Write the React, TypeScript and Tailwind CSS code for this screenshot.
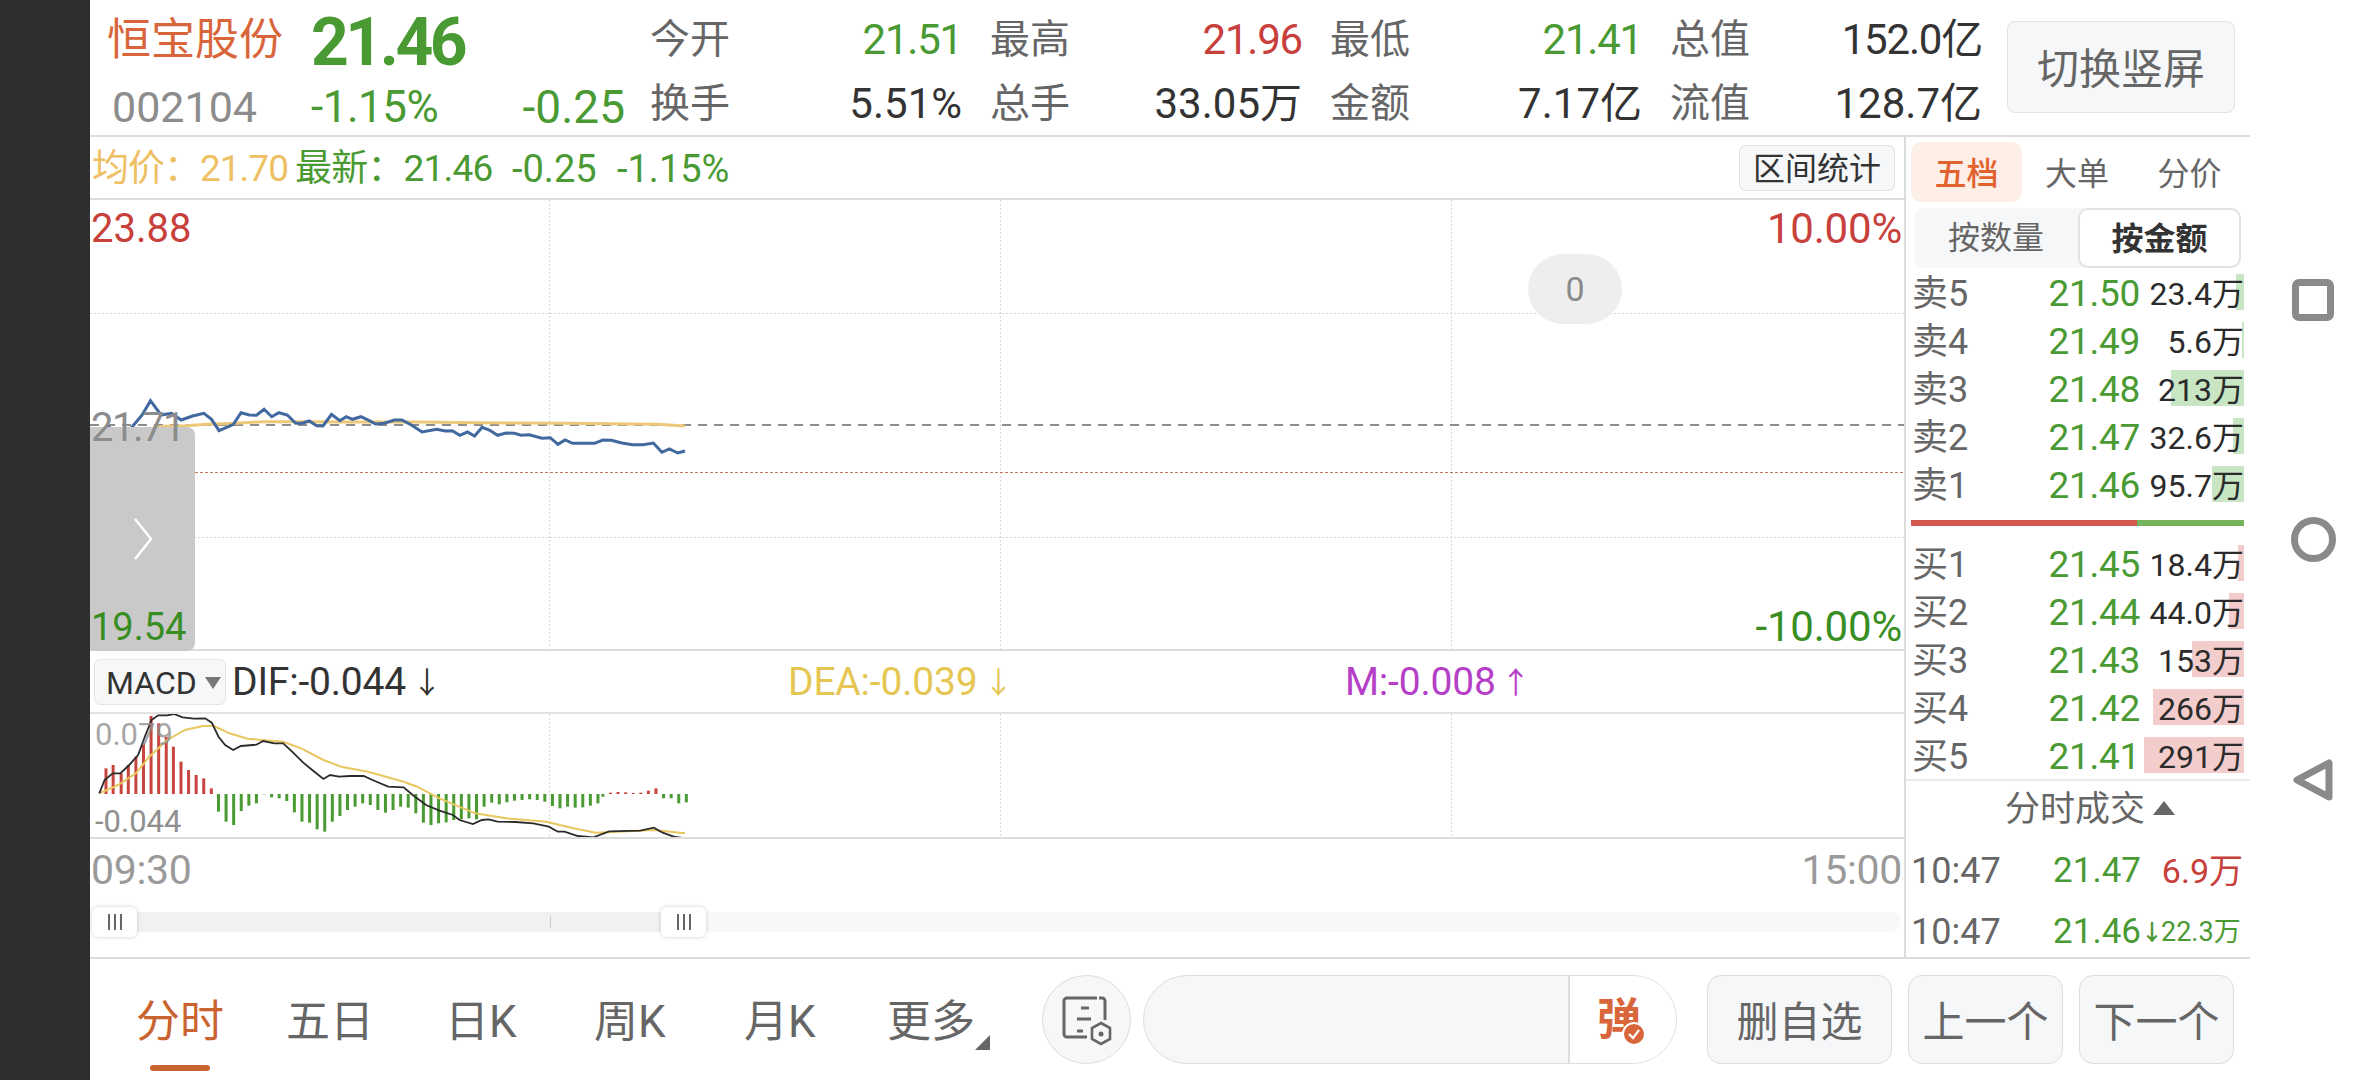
type Pt = [number, number]

// points were read off the reference, page coords = origin + z / factor
const mapPts = (pts: Pt[], ox: number, oy: number, fx: number, fy: number) =>
  pts.map(([x, y]) => `${(ox + x / fx).toFixed(1)},${(oy + y / fy).toFixed(1)}`).join(" ")

const priceLine: Pt[] = [
  [90, 228], [115, 170], [150, 205], [175, 165], [195, 135], [215, 92], [240, 135], [265, 130], [288, 150], [315, 138], [342, 130], [360, 148], [378, 182], [400, 170], [412, 163], [430, 128], [450, 135], [467, 136], [485, 118], [503, 140], [520, 128], [540, 135], [560, 160], [575, 160], [592, 153], [610, 167], [625, 168], [645, 133], [665, 152], [680, 140], [695, 148], [715, 140], [735, 152], [750, 162], [770, 160], [795, 150], [812, 150], [835, 165], [860, 186], [895, 178], [915, 183], [932, 182], [950, 196], [968, 186], [985, 198], [1003, 172], [1020, 180], [1040, 196], [1060, 189], [1080, 190], [1095, 196], [1115, 194], [1145, 205], [1165, 203], [1183, 223], [1200, 210], [1218, 220], [1270, 220], [1290, 210], [1310, 211], [1335, 219], [1360, 224], [1385, 224], [1410, 219], [1430, 247], [1448, 237], [1468, 249], [1485, 243],
]
const avgLine: Pt[] = [
  [90, 205], [130, 203], [170, 200], [200, 190], [225, 172], [260, 168], [300, 167], [350, 163], [420, 160], [480, 155], [560, 155], [700, 156], [850, 156], [1000, 158], [1200, 160], [1420, 163], [1485, 168],
]
const difLine: Pt[] = [
  [88, 460], [100, 420], [118, 400], [135, 400], [155, 375], [175, 345], [190, 290], [205, 240], [220, 226], [240, 226], [255, 222], [275, 232], [300, 236], [325, 235], [340, 248], [355, 290], [370, 315], [388, 330], [405, 318], [440, 314], [455, 303], [480, 310], [500, 310], [520, 335], [545, 368], [565, 390], [590, 417], [605, 405], [625, 410], [650, 408], [680, 408], [700, 420], [735, 440], [770, 442], [790, 465], [820, 495], [850, 512], [880, 525], [895, 540], [925, 552], [945, 540], [960, 538], [980, 545], [1020, 546], [1060, 550], [1095, 560], [1115, 575], [1130, 575], [1160, 588], [1195, 592], [1230, 574], [1300, 572], [1330, 563], [1350, 578], [1375, 590], [1400, 595],
]
const deaLine: Pt[] = [
  [88, 460], [130, 435], [170, 400], [200, 350], [240, 300], [280, 270], [320, 258], [345, 258], [380, 280], [420, 296], [450, 300], [500, 305], [540, 325], [590, 360], [630, 380], [690, 395], [770, 425], [800, 440], [850, 475], [930, 520], [1000, 535], [1090, 545], [1150, 565], [1200, 578], [1250, 575], [1330, 570], [1400, 580],
]
const macdBars: Pt[] = [
  [103, 385], [119, 375], [137, 400], [153, 375], [170, 350], [187, 310], [204, 228], [221, 250], [238, 290], [254, 320], [271, 365], [288, 390], [305, 405], [322, 415], [339, 445],
  [355, 515], [372, 545], [389, 555], [406, 513], [423, 497], [440, 490], [457, 463], [474, 472], [491, 475], [508, 483], [525, 517], [542, 545], [559, 548], [576, 568], [593, 575], [610, 545], [627, 528], [644, 510], [661, 500], [678, 490], [695, 495], [712, 510], [729, 518], [746, 510], [763, 500], [780, 503], [797, 520], [814, 548], [831, 555], [848, 550], [865, 547], [882, 540], [899, 538], [916, 535], [933, 538], [950, 500], [967, 488], [984, 493], [1001, 487], [1018, 482], [1035, 480], [1052, 478], [1069, 480], [1086, 485], [1103, 498], [1120, 505], [1137, 500], [1154, 503], [1171, 502], [1188, 497], [1205, 490], [1216, 470],
  [1233, 458], [1250, 456], [1267, 457], [1284, 459], [1301, 458], [1318, 452], [1335, 445],
  [1352, 475], [1369, 475], [1386, 490], [1403, 487],
]

const stats = [
  { label: "今开", value: "21.51", cls: "text-[#4a9a33]", label2: "换手", value2: "5.51%" },
  { label: "最高", value: "21.96", cls: "text-[#c8403c]", label2: "总手", value2: "33.05万" },
  { label: "最低", value: "21.41", cls: "text-[#4a9a33]", label2: "金额", value2: "7.17亿" },
  { label: "总值", value: "152.0亿", cls: "text-[#333333]", label2: "流值", value2: "128.7亿" },
]

const sells = [
  { name: "卖5", price: "21.50", vol: "23.4万", bar: 8 },
  { name: "卖4", price: "21.49", vol: "5.6万", bar: 2 },
  { name: "卖3", price: "21.48", vol: "213万", bar: 73 },
  { name: "卖2", price: "21.47", vol: "32.6万", bar: 11 },
  { name: "卖1", price: "21.46", vol: "95.7万", bar: 32 },
]
const buys = [
  { name: "买1", price: "21.45", vol: "18.4万", bar: 6 },
  { name: "买2", price: "21.44", vol: "44.0万", bar: 15 },
  { name: "买3", price: "21.43", vol: "153万", bar: 52 },
  { name: "买4", price: "21.42", vol: "266万", bar: 91 },
  { name: "买5", price: "21.41", vol: "291万", bar: 100 },
]

function OrderRow({ row, barCls }: { row: (typeof sells)[number]; barCls: string }) {
  return (
    <div className="relative flex h-[48px] items-center pl-[6px] pt-[4px]">
      <div className={`absolute right-0 top-[6px] h-[36px] ${barCls}`} style={{ width: row.bar }} />
      <span className="relative text-[36px] text-[#666666]">{row.name}</span>
      <span className="relative ml-auto text-[37px] tracking-[-0.3px] text-[#4a9a33]">{row.price}</span>
      <span className="relative w-[104px] text-right text-[32px] whitespace-nowrap text-[#2b2b2b]">{row.vol}</span>
    </div>
  )
}

function Grip() {
  return (
    <div className="flex h-[30px] w-[45px] items-center justify-center gap-[4px] rounded-[6px] bg-white shadow-[0_0_4px_rgba(0,0,0,0.18)]">
      <span className="h-[16px] w-[2px] bg-[#666666]" />
      <span className="h-[16px] w-[2px] bg-[#666666]" />
      <span className="h-[16px] w-[2px] bg-[#666666]" />
    </div>
  )
}

function ActionButton({ label, width }: { label: string; width: string }) {
  return (
    <button className={`flex h-[89px] items-center justify-center rounded-[14px] border border-[#dddddd] bg-[#f6f7f9] pt-[5px] text-[42px] text-[#666666] ${width}`}>
      {label}
    </button>
  )
}

export default function App() {
  return (
    <div className="flex h-[1080px] w-[2376px] overflow-hidden bg-white font-[Roboto,'Noto_Sans_CJK_SC',sans-serif]">
      <div className="w-[90px] shrink-0 bg-[#2e2e2e]" />

      <div className="flex w-[2160px] shrink-0 flex-col">
        {/* header */}
        <header className="flex h-[137px] shrink-0 border-b-2 border-[#dcdcdc] pt-[9px] leading-[62px]">
          <div className="w-[221px] pl-[17px]">
            <div className="h-[62px] text-[44px] text-[#d9653a]">恒宝股份</div>
            <div className="h-[62px] pl-[5px] pt-[5px] text-[43px] text-[#8c8c8c]">002104</div>
          </div>
          <div className="w-[341px]">
            <div className="h-[62px] pt-[3px] text-[66px] font-bold tracking-[-3.5px] text-[#4a9a33]">21.46</div>
            <div className="flex h-[62px] w-[314px] justify-between pt-[5px] text-[#4a9a33]">
              <span className="text-[44px] tracking-[-0.5px]">-1.15%</span>
              <span className="text-[46px]">-0.25</span>
            </div>
          </div>
          {stats.map((s) => (
            <div key={s.label} className="-ml-[2px] mr-[30px] w-[312px]">
              <div className="flex h-[62px] justify-between">
                <span className="text-[40px] text-[#666666]">{s.label}</span>
                <span className={`text-[42px] tracking-[-1.2px] ${s.cls}`}>{s.value}</span>
              </div>
              <div className="flex h-[62px] justify-between pt-[2px]">
                <span className="text-[40px] text-[#666666]">{s.label2}</span>
                <span className="text-[42px] text-[#333333]">{s.value2}</span>
              </div>
            </div>
          ))}
          <button className="-ml-[5px] mt-[12px] h-[92px] w-[228px] rounded-[8px] border border-[#e2e2e2] bg-[#f6f7f9] pt-[5px] text-[42px] leading-none text-[#666666]">
            切换竖屏
          </button>
        </header>

        {/* body */}
        <div className="flex h-[822px] shrink-0 border-b-2 border-[#dcdcdc]">
          <div className="flex w-[1814px] shrink-0 flex-col">
            <div className="flex h-[63px] shrink-0 items-center border-b-2 border-[#dcdcdc] pl-[2px] pt-[3px] text-[37px] text-[#4a9a33]">
              <span className="w-[203px] tracking-[-1px] text-[#eebf63]">均价：21.70</span>
              <span className="w-[217px] tracking-[-0.8px]">最新：21.46</span>
              <span className="w-[105px] text-[38px]">-0.25</span>
              <span className="text-[38px]">-1.15%</span>
              <span className="ml-auto mr-[9px] -mt-[3px] flex h-[46px] w-[156px] items-center justify-center rounded-[6px] border border-[#e2e2e2] bg-[#f6f7f9] pt-[2px] text-[32px] text-[#333333]">
                区间统计
              </span>
            </div>

            {/* price chart */}
            <div className="relative h-[451px] shrink-0 border-b-2 border-[#dcdcdc]">
              <svg className="absolute inset-0 h-[449px] w-[1814px]" viewBox="90 200 1814 449">
                <g stroke="#d8d8d8" strokeWidth="1" strokeDasharray="2 2">
                  <line x1="549.5" y1="200" x2="549.5" y2="649" />
                  <line x1="1000.5" y1="200" x2="1000.5" y2="649" />
                  <line x1="1451.5" y1="200" x2="1451.5" y2="649" />
                  <line x1="90" y1="313.5" x2="1904" y2="313.5" />
                  <line x1="90" y1="537.5" x2="1904" y2="537.5" />
                </g>
                <line x1="90" y1="425" x2="1904" y2="425" stroke="#8c8c8c" strokeWidth="2" strokeDasharray="9 7" />
                <line x1="90" y1="472.5" x2="1904" y2="472.5" stroke="#c0785a" strokeWidth="1" strokeDasharray="3 2" />
                <polyline points={mapPts(avgLine, 60, 370, 2.376, 3)} fill="none" stroke="#ecc878" strokeWidth="3" />
                <polyline points={mapPts(priceLine, 60, 370, 2.376, 3)} fill="none" stroke="#41699f" strokeWidth="3" />
              </svg>
              <span className="absolute left-[1px] top-[9px] text-[40px] leading-[40px] text-[#c8403c]">23.88</span>
              <span className="absolute right-[2px] top-[9px] text-[42px] leading-[40px] tracking-[-0.2px] text-[#c8403c]">10.00%</span>
              <span className="absolute right-[2px] top-[407px] text-[42px] leading-[40px] tracking-[-0.2px] text-[#388e22]">-10.00%</span>
              <span className="absolute left-[1438px] top-[54px] flex h-[70px] w-[94px] items-center justify-center rounded-full bg-[#eeeeee] text-[34px] text-[#8a8a8a]">
                0
              </span>
              <div className="absolute left-0 top-[227px] flex h-[224px] w-[105px] items-center justify-center rounded-r-[8px] bg-[#c9c9c9]">
                <svg className="h-[44px] w-[22px]" viewBox="0 0 22 44" fill="none" stroke="#ffffff" strokeWidth="2.5">
                  <polyline points="3,2 19,22 3,42" />
                </svg>
              </div>
              <span className="absolute left-[1px] top-[208px] text-[40px] leading-[40px] tracking-[-1.5px] text-[#8c8c8c]">21.71</span>
              <span className="absolute left-[1px] top-[407px] text-[38px] leading-[40px] text-[#388e22]">19.54</span>
            </div>

            {/* macd header */}
            <div className="flex h-[63px] shrink-0 items-center border-b-2 border-[#e2e2e2] pt-[2px] text-[39px] text-[#333333]">
              <div className="-mt-[2px] ml-[4px] flex h-[46px] w-[132px] items-center gap-[8px] rounded-[6px] border border-[#e6e6e6] bg-[#f6f7f9] pl-[11px] pt-[2px] text-[32px]">
                MACD
                <span className="h-0 w-0 border-x-[8px] border-t-[12px] border-x-transparent border-t-[#777777]" />
              </div>
              <span className="ml-[6px] flex w-[556px] items-center gap-[6px] tracking-[-0.2px]">
                DIF:-0.044<span className="text-[30px]">↓</span>
              </span>
              <span className="flex w-[557px] items-center gap-[6px] tracking-[-0.2px] text-[#e6c652]">
                DEA:-0.039<span className="text-[30px]">↓</span>
              </span>
              <span className="flex items-center gap-[5px] tracking-[-0.2px] text-[#b63fc7]">
                M:-0.008<span className="text-[30px]">↑</span>
              </span>
            </div>

            {/* macd chart */}
            <div className="relative h-[125px] shrink-0 border-b-2 border-[#dcdcdc]">
              <svg className="absolute inset-0 h-[123px] w-[1814px]" viewBox="90 714 1814 123">
                <g stroke="#d8d8d8" strokeWidth="1" strokeDasharray="2 2">
                  <line x1="549.5" y1="714" x2="549.5" y2="837" />
                  <line x1="1000.5" y1="714" x2="1000.5" y2="837" />
                  <line x1="1451.5" y1="714" x2="1451.5" y2="837" />
                </g>
                {macdBars.map(([x, y]) => {
                  const px = 60 + x / 2.24
                  const py = 640 + y / 3
                  const base = 640 + 462 / 3
                  const up = py < base
                  return (
                    <rect
                      key={x}
                      x={px - 1.5}
                      y={up ? py : base}
                      width="3"
                      height={Math.abs(base - py)}
                      fill={up ? "#c8443e" : "#4a9a33"}
                    />
                  )
                })}
                <polyline points={mapPts(deaLine, 60, 640, 2.24, 3)} fill="none" stroke="#e8c75f" strokeWidth="2" />
                <polyline points={mapPts(difLine, 60, 640, 2.24, 3)} fill="none" stroke="#2b2b2b" strokeWidth="1.8" />
              </svg>
              <span className="absolute left-[5px] top-[3px] text-[31px] leading-[36px] text-[#8f8f8f]/80">0.079</span>
              <span className="absolute left-[5px] top-[90px] text-[31px] leading-[36px] text-[#8f8f8f]">-0.044</span>
            </div>

            <div className="flex h-[60px] shrink-0 items-center justify-between pl-[1px] pr-[2px] pt-[4px] text-[41px] tracking-[-0.3px] text-[#9a9a9a]">
              <span>09:30</span>
              <span>15:00</span>
            </div>

            {/* slider */}
            <div className="relative mt-[13px] ml-[2px] flex h-[20px] w-[1809px] shrink-0 rounded-r-[10px] bg-[#f7f8fa]">
              <div className="relative h-full w-[594px] bg-[#f0f1f3]">
                <span className="absolute left-[458px] top-[4px] h-[12px] w-[1px] bg-[#cccccc]" />
              </div>
              <div className="absolute -top-[5px] left-0">
                <Grip />
              </div>
              <div className="absolute -top-[5px] left-[569px]">
                <Grip />
              </div>
            </div>
          </div>

          {/* order book */}
          <aside className="flex w-[346px] shrink-0 flex-col border-l-2 border-[#dcdcdc]">
            <div className="flex h-[65px] shrink-0 items-center pl-[5px] pt-[5px] text-[32px] text-[#666666]">
              <span className="flex h-[60px] w-[111px] items-center justify-center rounded-[10px] bg-[#fdeee8] pt-[4px] font-medium text-[#e2622e]">五档</span>
              <span className="w-[110px] pt-[4px] text-center">大单</span>
              <span className="w-[115px] pt-[4px] text-center">分价</span>
            </div>
            <div className="ml-[8px] mt-[6px] flex h-[60px] w-[327px] shrink-0 rounded-[10px] bg-[#f6f7f9] text-[32px] leading-[60px]">
              <span className="w-[164px] text-center text-[#666666]">按数量</span>
              <span className="w-[163px] rounded-[10px] border-2 border-[#e2e2e2] bg-white text-center leading-[58px] font-bold text-[#333333]">按金额</span>
            </div>
            <div className="w-[338px] shrink-0">
              {sells.map((r) => (
                <OrderRow key={r.name} row={r} barCls="bg-[#c9e6c4]" />
              ))}
            </div>
            <div className="ml-[5px] mt-[12px] flex h-[6px] w-[333px] shrink-0">
              <div className="w-[226px] bg-[#d2574e]" />
              <div className="flex-1 bg-[#74b35c]" />
            </div>
            <div className="mt-[13px] w-[338px] shrink-0">
              {buys.map((r) => (
                <OrderRow key={r.name} row={r} barCls="bg-[#f3cccc]" />
              ))}
            </div>
            <div className="flex h-[58px] shrink-0 items-center justify-center gap-[8px] border-t-2 border-[#ebebeb] pl-[24px] pt-[2px] text-[35px] text-[#666666]">
              分时成交
              <span className="mb-[4px] h-0 w-0 border-x-[11px] border-b-[14px] border-x-transparent border-b-[#666666]" />
            </div>
            <div className="flex h-[64px] shrink-0 items-center pl-[5px] pr-[7px] pt-[4px]">
              <span className="text-[36px] text-[#666666]">10:47</span>
              <span className="ml-auto text-[35px] text-[#4a9a33]">21.47</span>
              <span className="w-[102px] text-right text-[34px] text-[#c8403c]">6.9万</span>
            </div>
            <div className="flex h-[58px] shrink-0 items-center pl-[5px] pr-[7px] pt-[4px]">
              <span className="text-[36px] text-[#666666]">10:47</span>
              <span className="ml-auto text-[35px] text-[#4a9a33]">21.46</span>
              <span className="flex w-[102px] items-center whitespace-nowrap text-[27px] text-[#4a9a33]">
                <span className="w-[20px] text-center text-[22px] font-bold">↓</span>
                <span>22.3万</span>
              </span>
            </div>
          </aside>
        </div>

        {/* bottom bar */}
        <div className="flex flex-1 items-start pt-[16px]">
          <div className="relative flex h-[89px] w-[952px] shrink-0 items-center pt-[5px] text-[44px] text-[#666666]">
            <span className="ml-[46px] w-[150px] text-[#c9632f]">分时</span>
            <span className="w-[159px]">五日</span>
            <span className="w-[149px]">日K</span>
            <span className="w-[150px]">周K</span>
            <span className="w-[143px]">月K</span>
            <span>更多</span>
            <span className="absolute left-[885px] top-[60px] h-0 w-0 border-l-[15px] border-b-[15px] border-l-transparent border-b-[#666666]" />
            <span className="absolute left-[60px] top-[90px] h-[6px] w-[60px] rounded-full bg-[#c9632f]" />
          </div>
          <div className="flex h-[89px] w-[89px] shrink-0 items-center justify-center rounded-full border border-[#dddddd] bg-[#f6f7f9]">
            <svg className="h-[52px] w-[52px]" viewBox="0 0 52 52" fill="none" stroke="#666666" strokeWidth="3">
              <path d="M36 4H6a3 3 0 0 0-3 3v33a3 3 0 0 0 3 3h20M38 4h3a3 3 0 0 1 3 3v19" />
              <path d="M20 14h8M16 25h14M16 37h6" />
              <path d="M40 29l9 5v11l-9 5-9-5V34z" strokeWidth="2.6" />
              <circle cx="40" cy="40" r="2.5" fill="#666666" stroke="none" />
            </svg>
          </div>
          <div className="ml-[12px] flex h-[89px] w-[534px] shrink-0 overflow-hidden rounded-full border border-[#dddddd] bg-[#f6f7f9]">
            <div className="w-[426px] border-r-2 border-[#dddddd]" />
            <div className="relative flex flex-1 items-center justify-center bg-white pr-[8px] text-[44px] font-bold text-[#d9653a]">
              弹
              <span className="absolute bottom-[17px] left-[52px] flex h-[24px] w-[24px] items-center justify-center rounded-full border-2 border-white bg-[#d9653a]">
                <svg className="h-[14px] w-[14px]" viewBox="0 0 14 14" fill="none" stroke="#ffffff" strokeWidth="2.2">
                  <polyline points="2,7 6,11 12,3" />
                </svg>
              </span>
            </div>
          </div>
          <div className="ml-[30px] flex gap-[16px]">
            <ActionButton label="删自选" width="w-[185px]" />
            <ActionButton label="上一个" width="w-[155px]" />
            <ActionButton label="下一个" width="w-[155px]" />
          </div>
        </div>
      </div>

      {/* android nav */}
      <div className="relative flex-1 bg-white">
        <span className="absolute left-[42px] top-[279px] h-[42px] w-[42px] rounded-[7px] border-[7px] border-[#8a8a8a]" />
        <span className="absolute left-[41px] top-[517px] h-[45px] w-[45px] rounded-full border-[7px] border-[#8a8a8a]" />
        <svg className="absolute left-[42px] top-[758px] h-[44px] w-[42px]" viewBox="0 0 42 44" fill="none" stroke="#8a8a8a" strokeWidth="7" strokeLinejoin="round">
          <polygon points="37,5 37,39 5,22" />
        </svg>
      </div>
    </div>
  )
}
